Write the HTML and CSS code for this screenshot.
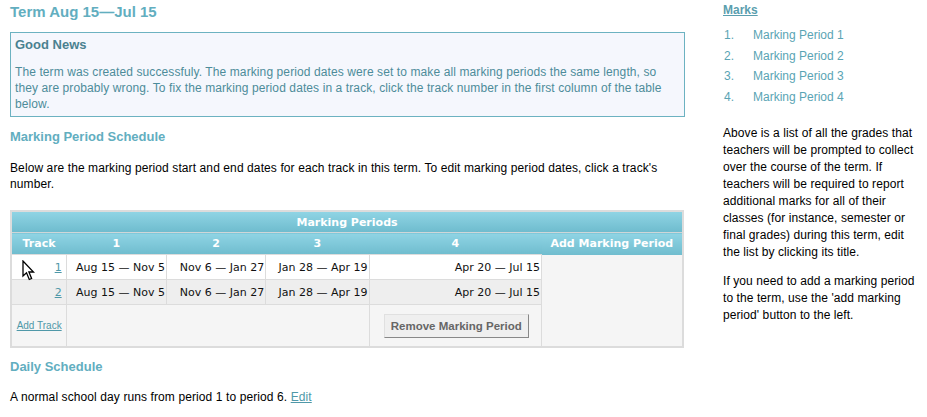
FILE: index.html
```html
<!DOCTYPE html>
<html>
<head>
<meta charset="utf-8">
<link rel="stylesheet" href="styles.css">
</head>
<body>
<div class="page">
  <div class="main">
    <h1 class="title">Term Aug 15—Jul 15</h1>
    <div class="notice">
      <h3 class="notice-title">Good News</h3>
      <p class="notice-text">The term was created successfuly. The marking period dates were set to make all marking periods the same length, so they are probably wrong. To fix the marking period dates in a track, click the track number in the first column of the table below.</p>
    </div>
    <h2 class="section">Marking Period Schedule</h2>
    <p class="body-text">Below are the marking period start and end dates for each track in this term. To edit marking period dates, click a track's number.</p>
    <div class="table-wrap">
      <table class="mp-table">
        <colgroup>
          <col class="c-track"><col class="c-1"><col class="c-2"><col class="c-3"><col class="c-4"><col class="c-add">
        </colgroup>
        <thead>
          <tr class="h1row"><th colspan="6">Marking Periods</th></tr>
          <tr class="h2row"><th>Track</th><th>1</th><th>2</th><th>3</th><th>4</th><th>Add Marking Period</th></tr>
        </thead>
        <tbody>
          <tr class="row-a">
            <td class="track"><a href="#">1</a></td>
            <td class="date">Aug 15 — Nov 5</td>
            <td class="date">Nov 6 — Jan 27</td>
            <td class="date">Jan 28 — Apr 19</td>
            <td class="date">Apr 20 — Jul 15</td>
            <td class="addcol" rowspan="3"></td>
          </tr>
          <tr class="row-b">
            <td class="track"><a href="#">2</a></td>
            <td class="date">Aug 15 — Nov 5</td>
            <td class="date">Nov 6 — Jan 27</td>
            <td class="date">Jan 28 — Apr 19</td>
            <td class="date">Apr 20 — Jul 15</td>
          </tr>
          <tr class="row-c">
            <td class="track small"><a href="#">Add Track</a></td>
            <td colspan="3" class="blank"></td>
            <td class="btncell"><button class="btn">Remove Marking Period</button></td>
          </tr>
        </tbody>
      </table>
      <svg class="cursor" width="14" height="22" viewBox="0 0 14 22"><path d="M1 1 L1 16 L4.5 12.8 L7.3 19.5 L9.6 18.5 L6.9 12 L11.5 12 Z" fill="#fff" stroke="#000" stroke-width="1.3" stroke-linejoin="miter"/></svg>
    </div>
    <h2 class="section daily">Daily Schedule</h2>
    <p class="body-text daily-text">A normal school day runs from period 1 to period 6. <a href="#">Edit</a></p>
  </div>
  <div class="side">
    <h3 class="side-title"><a href="#">Marks</a></h3>
    <ol class="marks">
      <li><span class="num">1.</span><span>Marking Period 1</span></li>
      <li><span class="num">2.</span><span>Marking Period 2</span></li>
      <li><span class="num">3.</span><span>Marking Period 3</span></li>
      <li><span class="num">4.</span><span>Marking Period 4</span></li>
    </ol>
    <p class="side-text first">Above is a list of all the grades that teachers will be prompted to collect over the course of the term. If teachers will be required to report additional marks for all of their classes (for instance, semester or final grades) during this term, edit the list by clicking its title.</p>
    <p class="side-text">If you need to add a marking period to the term, use the 'add marking period' button to the left.</p>
  </div>
</div>
</body>
</html>
```
FILE: styles.css
```css
html, body {
  margin: 0;
  padding: 0;
  background: #fff;
}
body {
  font-family: "Liberation Sans", Arial, sans-serif;
  font-size: 12px;
  color: #000;
}
a { color: #4f98a8; }
.page {
  display: flex;
  padding: 0 10px;
}
.main {
  width: 675px;
  flex: none;
}
.side {
  width: 196px;
  margin-left: 38px;
  flex: none;
}
.title {
  margin: 2px 0 0;
  font-size: 15px;
  line-height: 20px;
  color: #62aebf;
  font-weight: bold;
}
.notice {
  margin-top: 10px;
  border: 1px solid #6cb2c1;
  background: #f5f7fd;
  padding: 4px 3px 4px 4px;
}
.notice-title {
  margin: 0;
  font-size: 13px;
  line-height: 16px;
  color: #4a8190;
  font-weight: bold;
}
.notice-text {
  margin: 11px 0 0;
  line-height: 16px;
  color: #4d8c9a;
  letter-spacing: 0.1px;
}
.section {
  margin: 12px 0 0;
  font-size: 13px;
  line-height: 16px;
  color: #62aebf;
  font-weight: bold;
}
.body-text {
  margin: 15px 0 0;
  line-height: 16px;
  letter-spacing: 0.1px;
}
.table-wrap {
  position: relative;
  margin-top: 18px;
  width: 674px;
}
.mp-table {
  width: 674px;
  border-collapse: collapse;
  border: 2px solid #dcdcdc;
  table-layout: fixed;
  font-family: "DejaVu Sans", sans-serif;
  font-size: 11px;
}
.c-track { width: 55px; }
.c-1 { width: 100px; }
.c-2 { width: 99px; }
.c-3 { width: 103px; }
.c-4 { width: 172px; }
.c-add { width: 141px; }
.mp-table th {
  color: #fff;
  font-weight: bold;
  font-size: 11px;
  padding: 0;
  text-align: center;
  background: linear-gradient(#8fd4e4, #6fbcce);
}
.h1row th {
  height: 20px;
  border-bottom: 1px solid #cfd6d8;
}
.h2row th {
  height: 21px;
}
.mp-table td {
  padding: 0 1px 0 0;
  border: 1px solid #dcdcdc;
  color: #111;
}
.row-a td { height: 24px; background: #fff; }
.row-b td { height: 24px; background: #eeeeee; }
.row-c td { height: 41px; background: #f5f5f5; }
.mp-table td.addcol { background: #f5f5f5; border: none; }
.date { text-align: right; white-space: nowrap; }
.track { text-align: right; }
.mp-table td.track { padding-right: 4px; }
.track a { color: #4f98a8; }
.track.small { font-family: "Liberation Sans", Arial, sans-serif; font-size: 10px; }
.btncell { text-align: center; }
.btn {
  font-family: "Liberation Sans", Arial, sans-serif;
  font-weight: bold;
  font-size: 11.5px;
  color: #666;
  background: #efefef;
  border: 1px solid;
  border-color: #e0e0e0 #888 #888 #e0e0e0;
  height: 24px;
  padding: 0 6px;
  margin-left: 3px;
  white-space: nowrap;
}
.cursor {
  position: absolute;
  left: 12px;
  top: 50px;
}
.daily { margin-top: 11px; }
.daily-text { margin-top: 14px; }
.side-title {
  margin: 3px 0 0;
  font-size: 12px;
  line-height: 14px;
  font-weight: bold;
}
.side-title a { color: #5a9eae; }
.marks {
  list-style: none;
  margin: 8px 0 0;
  padding: 0;
  color: #5aa4b4;
}
.marks li {
  display: flex;
  height: 20.5px;
  line-height: 20px;
}
.marks .num {
  width: 29px;
  padding-left: 1px;
}
.side-text {
  margin: 12px 0 0;
  line-height: 17px;
  letter-spacing: 0.08px;
}
.side-text.first { margin-top: 18px; }
```
